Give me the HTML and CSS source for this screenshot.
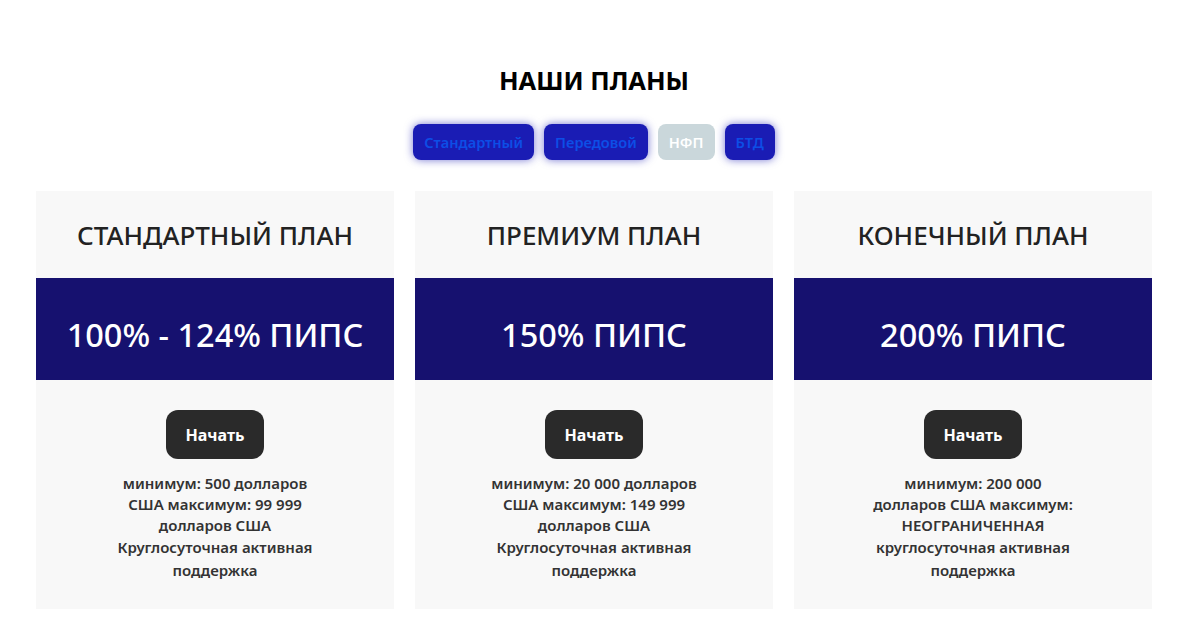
FILE: index.html
```html
<!DOCTYPE html>
<html lang="ru">
<head>
<meta charset="utf-8">
<link rel="stylesheet" href="styles.css">
</head>
<body>
<section class="plans">
  <h2 class="title">НАШИ ПЛАНЫ</h2>
  <div class="tabs">
    <button class="tab">Стандартный</button>
    <button class="tab">Передовой</button>
    <button class="tab tab-grey">НФП</button>
    <button class="tab">БТД</button>
  </div>
  <div class="cards">
    <div class="card">
      <div class="card-head">СТАНДАРТНЫЙ ПЛАН</div>
      <div class="card-band">100% - 124% ПИПС</div>
      <div class="card-body">
        <button class="start">Начать</button>
        <p class="info">минимум: 500 долларов США максимум: 99 999 долларов США</p>
        <p class="support">Круглосуточная активная поддержка</p>
      </div>
    </div>
    <div class="card">
      <div class="card-head">ПРЕМИУМ ПЛАН</div>
      <div class="card-band">150% ПИПС</div>
      <div class="card-body">
        <button class="start">Начать</button>
        <p class="info">минимум: 20 000 долларов США максимум: 149 999 долларов США</p>
        <p class="support">Круглосуточная активная поддержка</p>
      </div>
    </div>
    <div class="card">
      <div class="card-head">КОНЕЧНЫЙ ПЛАН</div>
      <div class="card-band">200% ПИПС</div>
      <div class="card-body">
        <button class="start">Начать</button>
        <p class="info">минимум: 200 000 долларов США максимум: НЕОГРАНИЧЕННАЯ</p>
        <p class="support">круглосуточная активная поддержка</p>
      </div>
    </div>
  </div>
</section>
</body>
</html>
```
FILE: styles.css
```css
* { box-sizing: border-box; }
body {
  margin: 0;
  background: #fff;
  font-family: "Noto Sans", "Open Sans", sans-serif;
  color: #222;
}
.plans {
  width: 1140px;
  margin: 0 auto;
  padding: 62px 12px 0;
}
.title {
  margin: 0;
  text-align: center;
  font-size: 25.5px;
  font-weight: 700;
  color: #000;
  line-height: 36px;
}
.tabs {
  display: flex;
  justify-content: center;
  gap: 10px;
  margin-top: 26px;
}
.tab {
  height: 36px;
  padding: 0 11px;
  border: none;
  border-radius: 8px;
  background: #1a1cb4;
  color: #0d4ee6;
  font-family: inherit;
  font-size: 14.6px;
  font-weight: 600;
  box-shadow: 0 0 8px rgba(26, 28, 180, 0.6);
}
.tab-grey {
  background: #cad7db;
  color: #fff;
  box-shadow: none;
}
.cards {
  display: grid;
  grid-template-columns: repeat(3, 1fr);
  gap: 21px;
  margin-top: 31px;
}
.card {
  background: #f8f8f8;
}
.card-head {
  height: 87px;
  display: flex;
  align-items: center;
  justify-content: center;
  font-size: 26px;
  font-weight: 500;
  color: #222;
}
.card-band {
  height: 102px;
  display: flex;
  align-items: center;
  justify-content: center;
  padding-top: 10px;
  background: #16116f;
  color: #fff;
  font-size: 32.5px;
  font-weight: 500;
}
.card-body {
  display: flex;
  flex-direction: column;
  align-items: center;
  padding: 30px 0 27px;
}
.start {
  height: 49px;
  padding: 0 20px;
  border: none;
  border-radius: 12px;
  background: #2a2a2a;
  color: #fff;
  font-family: inherit;
  font-size: 16px;
  font-weight: 700;
}
.info, .support {
  width: 210px;
  margin: 0;
  text-align: center;
  font-size: 15px;
  font-weight: 600;
  color: #333;
  line-height: 21px;
}
.info { margin-top: 14px; }
.support { line-height: 23px; }
```
